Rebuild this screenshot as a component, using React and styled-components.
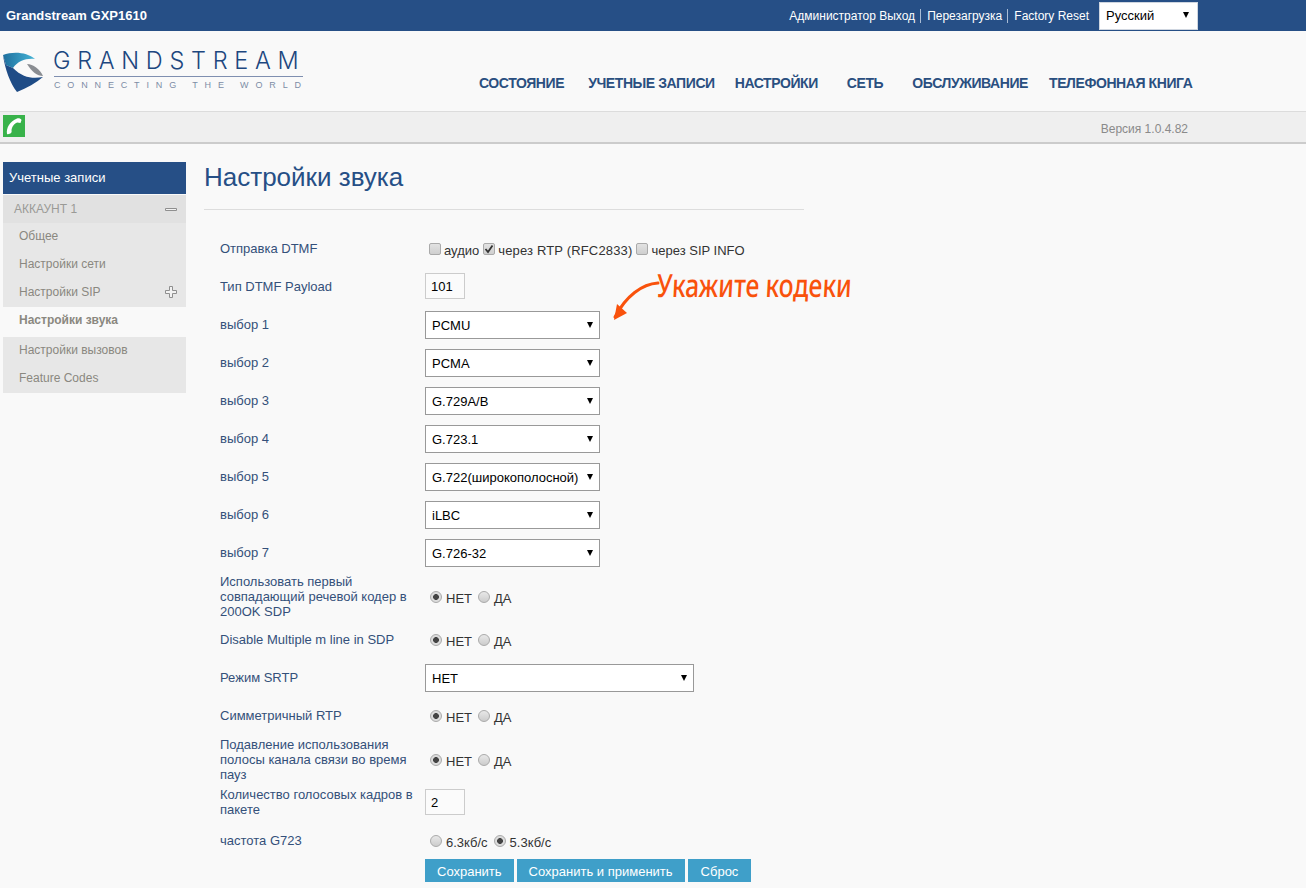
import React from 'react';
import styled, { createGlobalStyle } from 'styled-components';

const GlobalStyle = createGlobalStyle`
    html, body {
        margin: 0;
        padding: 0;
        background: #f9f9f9;
    }
    body {
        font-family: "Liberation Sans", Arial, sans-serif;
        font-size: 13px;
        overflow: hidden;
    }
`;

const Page = styled.div`
    width: 1306px;
    height: 888px;
    overflow: hidden;
`;

// top blue bar
const TopBar = styled.header`
    height: 31px;
    background: #264f86;
    display: flex;
    align-items: center;
    justify-content: space-between;
    padding: 0 108px 0 6px;
    color: #fff;
`;

const ProductName = styled.div`
    font-size: 13px;
    font-weight: 700;
`;

const TopLinks = styled.div`
    display: flex;
    align-items: center;
    font-size: 12px;
`;

const TopLink = styled.a`
    color: #fff;
    & + & {
        border-left: 1px solid #a9bcd5;
        margin-left: 5px;
        padding-left: 6px;
    }
`;

const LangSelectWrap = styled.div`
    position: relative;
    width: 99px;
    height: 28px;
    margin-left: 10px;
    &::after {
        content: '';
        position: absolute;
        right: 9px;
        top: 10px;
        border-left: 3.5px solid transparent;
        border-right: 3.5px solid transparent;
        border-top: 6px solid #000;
    }
`;

const LangSelect = styled.select`
    appearance: none;
    width: 100%;
    height: 100%;
    box-sizing: border-box;
    border: 1px solid #cfd6e0;
    border-radius: 0;
    background: #fff;
    color: #000;
    padding: 0 6px;
    font: 13px "Liberation Sans", Arial, sans-serif;
`;

// logo + main menu
const LogoRow = styled.div`
    height: 81px;
    display: flex;
    box-sizing: border-box;
    border-bottom: 1px solid #dcdcdc;
`;

const Logo = styled.div`
    width: 479px;
    padding: 17px 0 0 3px;
    box-sizing: border-box;
    display: flex;
    gap: 7px;
`;

const LogoMark = styled.svg`
    margin-top: 3px;
    flex: none;
`;

const LogoText = styled.div`
    width: 249px;
    display: flex;
    flex-direction: column;
`;

const LogoName = styled.div`
    font-family: "Inter", sans-serif;
    font-size: 23.5px;
    font-weight: 300;
    line-height: 26px;
    letter-spacing: 6.7px;
    text-indent: -1px;
    color: #1d477f;
    white-space: nowrap;
    border-bottom: 1px solid #7f8fb0;
    padding-bottom: 2px;
`;

const LogoTag = styled.div`
    font-size: 9px;
    line-height: 13px;
    padding-top: 2px;
    letter-spacing: 6.85px;
    color: #7d8da6;
    white-space: nowrap;
`;

const MainMenu = styled.nav`
    display: flex;
    gap: 22px;
    padding-top: 44px;
    font-size: 14px;
    font-weight: 700;
    letter-spacing: -0.42px;
    color: #2a4f80;
    white-space: nowrap;
`;

const MenuItem = styled.a`
    line-height: 17px;
    margin-left: ${p => p.$extra || 0}px;
`;

const StatusBar = styled.div`
    height: 32px;
    box-sizing: border-box;
    background: #efefef;
    border-bottom: 2px solid #cccccc;
    display: flex;
    justify-content: space-between;
    padding: 3px 118px 0 3px;
`;

const PhoneIcon = styled.div`
    width: 22px;
    height: 22px;
    background: #38b24a;
    display: flex;
    align-items: center;
    justify-content: center;
`;

const Version = styled.div`
    font-size: 12px;
    color: #8a8a8a;
    padding-top: 7px;
`;

const Body = styled.div`
    display: flex;
    padding: 18px 0 0 3px;
`;

// left menu
const Sidebar = styled.aside`
    width: 183px;
    flex: none;
`;

const SideTitle = styled.div`
    height: 32px;
    box-sizing: border-box;
    background: #264f86;
    color: #fff;
    display: flex;
    align-items: center;
    padding: 0 0 2px 6px;
    margin-bottom: 1px;
`;

const SideGroup = styled.div`
    height: 28px;
    padding: 0 9px 0 11px;
    background: #e1e1e1;
    color: #9a9a96;
    font-size: 12px;
    display: flex;
    align-items: center;
    justify-content: space-between;
`;

const SideItem = styled.div`
    height: ${p => (p.$active ? 30 : 28)}px;
    padding: 0 9px ${p => (p.$active ? 4 : 2)}px 16px;
    box-sizing: border-box;
    background: ${p => (p.$active ? 'transparent' : '#e7e7e7')};
    color: #8a8880;
    font-size: 12px;
    font-weight: ${p => (p.$active ? 700 : 400)};
    display: flex;
    align-items: center;
    justify-content: space-between;
`;

const Main = styled.main`
    margin-left: 18px;
    width: 600px;
`;

const Title = styled.h1`
    margin: 0;
    height: 48px;
    box-sizing: border-box;
    border-bottom: 1px solid #dddddd;
    font-size: 26px;
    font-weight: 400;
    line-height: 31px;
    color: #264f86;
`;

const Form = styled.div`
    margin-top: 20px;
    padding-left: 16px;
    width: 600px;
`;

const Row = styled.div`
    height: ${p => p.$h}px;
    box-sizing: border-box;
    padding-top: ${p => p.$pt || 0}px;
    display: flex;
    align-items: center;
`;

const Label = styled.div`
    width: 205px;
    flex: none;
    box-sizing: border-box;
    padding: 0 5px ${p => p.$nudge ?? 1}px 0;
    line-height: 15px;
    color: #34507a;
`;

const Options = styled.div`
    display: flex;
    align-items: center;
    gap: ${p => p.$gap || 4}px;
    color: #333;
    padding-left: ${p => p.$pad || 4}px;
    padding-top: ${p => p.$top || 1}px;
`;

const OptionGroup = styled.label`
    display: flex;
    align-items: center;
    gap: 3px;
    letter-spacing: ${p => (p.$wide ? 0.16 : 0)}px;
`;

const Box = styled.span`
    width: 12px;
    height: 12px;
    box-sizing: border-box;
    border: 1px solid #aaa;
    border-radius: 2px;
    background: linear-gradient(#e2e2e2, #cfcfcf);
    display: inline-flex;
    align-items: center;
    justify-content: center;
    margin-top: -3px;
`;

const Radio = styled.span`
    width: 12px;
    height: 12px;
    box-sizing: border-box;
    border: 1px solid #aaa;
    border-radius: 50%;
    background: ${p => (p.$on
        ? 'radial-gradient(circle, #444 0 2.6px, #dcdcdc 3.2px)'
        : 'linear-gradient(#e8e8e8, #cccccc)')};
    margin: -3px 1px 0 0;
`;

const TextInput = styled.input`
    width: 40px;
    height: 26px;
    box-sizing: border-box;
    border: 1px solid #ccc;
    background: #fbfbfb;
    color: #000;
    padding: 0 5px;
    margin-bottom: ${p => p.$lift || 0}px;
    font: 13px "Liberation Sans", Arial, sans-serif;
`;

const SelectWrap = styled.div`
    position: relative;
    width: ${p => p.$w || 175}px;
    height: 28px;
    &::after {
        content: '';
        position: absolute;
        right: 7px;
        top: 11px;
        border-left: 3.5px solid transparent;
        border-right: 3.5px solid transparent;
        border-top: 6px solid #000;
    }
`;

const Select = styled.select`
    appearance: none;
    width: 100%;
    height: 100%;
    box-sizing: border-box;
    border: 1px solid #999;
    border-radius: 0;
    background: #fff;
    color: #000;
    padding: 0 6px;
    font: 13px "Liberation Sans", Arial, sans-serif;
`;

const Buttons = styled.div`
    display: flex;
    gap: 3px;
    padding-left: 205px;
`;

const Button = styled.button`
    height: 23px;
    border: 0;
    padding: 1px ${p => p.$pad || 12}px 0;
    background: #3f9fc9;
    color: #fff;
    font: 13px "Liberation Sans", Arial, sans-serif;
`;

// orange annotation over the form
const Note = styled.div`
    position: absolute;
    left: 612px;
    top: 266px;
    color: #f9520c;
`;

const NoteText = styled.div`
    font-family: "Noto Sans", sans-serif;
    font-size: 32px;
    font-weight: 500;
    line-height: 38px;
    white-space: nowrap;
    transform-origin: left top;
    transform: scaleX(0.77) skewX(-4deg);
    margin-left: 46px;
`;

const NoteArrow = styled.svg`
    position: absolute;
    left: 0;
    top: 10px;
`;

const Content = styled.div`
    position: relative;
`;

const codecs = ['PCMU', 'PCMA', 'G.729A/B', 'G.723.1', 'G.722(широкополосной)', 'iLBC', 'G.726-32'];

const SelectField = ({ value, w }) => (
    <SelectWrap $w={w}>
        <Select defaultValue={value}>
            <option>{value}</option>
        </Select>
    </SelectWrap>
);

const YesNo = ({ top }) => (
    <Options $pad={5} $gap={6} $top={top}>
        <OptionGroup><Radio $on />НЕТ</OptionGroup>
        <OptionGroup><Radio />ДА</OptionGroup>
    </Options>
);

const GrandstreamMark = () => (
    <LogoMark width="44" height="42" viewBox="0 0 44 42">
        <defs>
            <linearGradient id="gsTop" x1="0" y1="0" x2="1" y2="0">
                <stop offset="0" stopColor="#1f6f9e" />
                <stop offset="1" stopColor="#45b4d6" />
            </linearGradient>
        </defs>
        <path d="M0 4 C10 0 24 1 32 8 C23 7 15 10 10 17 L3 14 Z" fill="url(#gsTop)" />
        <path d="M0 4 C2 18 7 32 14 41 C24 37 33 32 40 26 C30 28 20 27 10 17 L3 14 Z" fill="#1f4c86" />
        <path d="M24 13 C30 13 37 18 40 25 C34 25 29 21 24 13 Z" fill="#8a8d92" />
    </LogoMark>
);

export default function App() {
    return (
        <Page>
            <GlobalStyle />
            <TopBar>
                <ProductName>Grandstream GXP1610</ProductName>
                <TopLinks>
                    <TopLink>Администратор Выход</TopLink>
                    <TopLink>Перезагрузка</TopLink>
                    <TopLink>Factory Reset</TopLink>
                    <LangSelectWrap>
                        <LangSelect defaultValue="Русский"><option>Русский</option></LangSelect>
                    </LangSelectWrap>
                </TopLinks>
            </TopBar>

            <LogoRow>
                <Logo>
                    <GrandstreamMark />
                    <LogoText>
                        <LogoName>GRANDSTREAM</LogoName>
                        <LogoTag>CONNECTING THE WORLD</LogoTag>
                    </LogoText>
                </Logo>
                <MainMenu>
                    <MenuItem>СОСТОЯНИЕ</MenuItem>
                    <MenuItem $extra={2}>УЧЕТНЫЕ ЗАПИСИ</MenuItem>
                    <MenuItem $extra={-2}>НАСТРОЙКИ</MenuItem>
                    <MenuItem $extra={7}>СЕТЬ</MenuItem>
                    <MenuItem $extra={7}>ОБСЛУЖИВАНИЕ</MenuItem>
                    <MenuItem $extra={-1}>ТЕЛЕФОННАЯ КНИГА</MenuItem>
                </MainMenu>
            </LogoRow>

            <StatusBar>
                <PhoneIcon>
                    <svg width="18" height="18" viewBox="0 0 18 18">
                        <path d="M2 17 C1 11 5 4 12 1.5 C13.5 1 16 1.5 16.5 3 L15.5 6 C13.5 5.5 12 5 11 6 C8 8 7 10 6.5 13 C6.5 14 7 15 6 16 C5 17 3 17.5 2 17 Z" fill="#fff" />
                    </svg>
                </PhoneIcon>
                <Version>Версия 1.0.4.82</Version>
            </StatusBar>

            <Content>
                <Body>
                    <Sidebar>
                        <SideTitle>Учетные записи</SideTitle>
                        <SideGroup>АККАУНТ 1
                            <svg width="12" height="12" viewBox="0 0 12 12"><path d="M0.5 5.5 H11.5 V7.5 H0.5 Z" fill="#f2f2f2" stroke="#8f8f8f" /></svg>
                        </SideGroup>
                        <SideItem>Общее</SideItem>
                        <SideItem>Настройки сети</SideItem>
                        <SideItem>Настройки SIP
                            <svg width="12" height="12" viewBox="0 0 12 12"><path d="M4.5 .5 H7.5 V4.5 H11.5 V7.5 H7.5 V11.5 H4.5 V7.5 H.5 V4.5 H4.5 Z" fill="#f2f2f2" stroke="#8f8f8f" /></svg>
                        </SideItem>
                        <SideItem $active>Настройки звука</SideItem>
                        <SideItem>Настройки вызовов</SideItem>
                        <SideItem>Feature Codes</SideItem>
                    </Sidebar>

                    <Main>
                        <Title>Настройки звука</Title>
                        <Form>
                            <Row $h={38}>
                                <Label>Отправка DTMF</Label>
                                <Options $top={3}>
                                    <OptionGroup><Box />аудио</OptionGroup>
                                    <OptionGroup $wide>
                                        <Box>
                                            <svg width="10" height="10" viewBox="0 0 10 10"><path d="M1.5 5 L4 8 L8.5 1.5" fill="none" stroke="#333" strokeWidth="1.8" /></svg>
                                        </Box>
                                        через RTP (RFC2833)
                                    </OptionGroup>
                                    <OptionGroup><Box />через SIP INFO</OptionGroup>
                                </Options>
                            </Row>
                            <Row $h={38}>
                                <Label>Тип DTMF Payload</Label>
                                <TextInput defaultValue="101" $lift={2} />
                            </Row>
                            {codecs.map((c, i) => (
                                <Row $h={38} key={c}>
                                    <Label>выбор {i + 1}</Label>
                                    <SelectField value={c} />
                                </Row>
                            ))}
                            <Row $h={50}>
                                <Label>Использовать первый совпадающий речевой кодер в 200OK SDP</Label>
                                <YesNo top={3} />
                            </Row>
                            <Row $h={38}>
                                <Label $nudge={3}>Disable Multiple m line in SDP</Label>
                                <YesNo />
                            </Row>
                            <Row $h={36}>
                                <Label $nudge={2}>Режим SRTP</Label>
                                <SelectField value="НЕТ" w={269} />
                            </Row>
                            <Row $h={41} $pt={1}>
                                <Label $nudge={3}>Симметричный RTP</Label>
                                <YesNo />
                            </Row>
                            <Row $h={48}>
                                <Label $nudge={3}>Подавление использования полосы канала связи во время пауз</Label>
                                <YesNo />
                            </Row>
                            <Row $h={34}>
                                <Label $nudge={0}>Количество голосовых кадров в пакете</Label>
                                <TextInput defaultValue="2" />
                            </Row>
                            <Row $h={40} $pt={6}>
                                <Label $nudge={3}>частота G723</Label>
                                <Options $pad={5} $gap={6}>
                                    <OptionGroup><Radio />6.3кб/с</OptionGroup>
                                    <OptionGroup><Radio $on />5.3кб/с</OptionGroup>
                                </Options>
                            </Row>
                            <Buttons>
                                <Button>Сохранить</Button>
                                <Button>Сохранить и применить</Button>
                                <Button $pad={13}>Сброс</Button>
                            </Buttons>
                        </Form>
                    </Main>
                </Body>
            </Content>

            <Note>
                <NoteArrow width="48" height="44" viewBox="0 0 48 44">
                    <path d="M46 7 C30 8 14 20 3 41" fill="none" stroke="#f9520c" strokeWidth="3" strokeLinecap="round" />
                    <path d="M2 44 L5 28 L15 37 Z" fill="#f9520c" />
                </NoteArrow>
                <NoteText>Укажите кодеки</NoteText>
            </Note>
        </Page>
    );
}
